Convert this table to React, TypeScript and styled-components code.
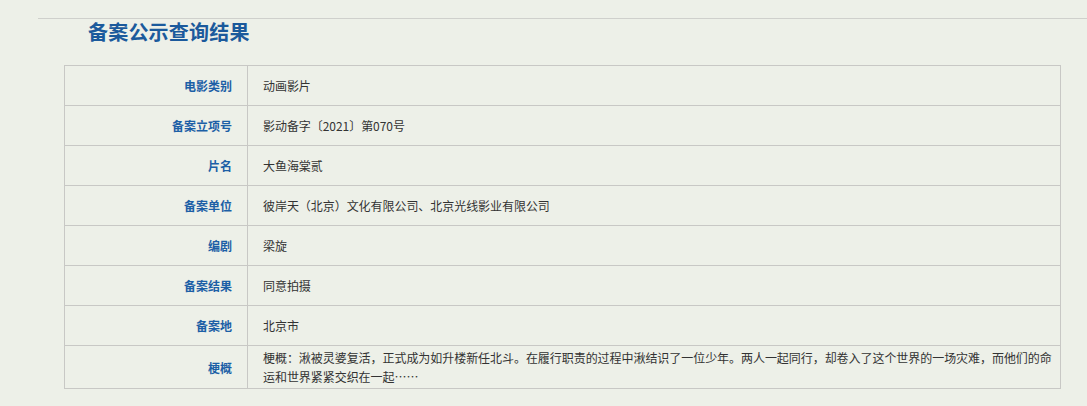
import React from "react";
import styled, { createGlobalStyle } from "styled-components";

const GlobalStyle = createGlobalStyle`
  html, body {
    margin: 0;
    padding: 0;
    background: #edf0e8;
    font-family: "Noto Sans CJK SC", "Noto Sans", sans-serif;
  }
`;

const rows: { label: string; value: string }[] = [
  { label: "电影类别", value: "动画影片" },
  { label: "备案立项号", value: "影动备字〔2021〕第070号" },
  { label: "片名", value: "大鱼海棠贰" },
  { label: "备案单位", value: "彼岸天（北京）文化有限公司、北京光线影业有限公司" },
  { label: "编剧", value: "梁旋" },
  { label: "备案结果", value: "同意拍摄" },
  { label: "备案地", value: "北京市" },
  {
    label: "梗概",
    value:
      "梗概：湫被灵婆复活，正式成为如升楼新任北斗。在履行职责的过程中湫结识了一位少年。两人一起同行，却卷入了这个世界的一场灾难，而他们的命运和世界紧紧交织在一起……",
  },
];

const App = () => {
  return (
    <>
      <GlobalStyle />
      <Page>
        <Header>
          <Title>备案公示查询结果</Title>
        </Header>
        <Result>
          <tbody>
            {rows.map((row) => (
              <Row key={row.label}>
                <Label>{row.label}</Label>
                <Value>{row.value}</Value>
              </Row>
            ))}
          </tbody>
        </Result>
      </Page>
    </>
  );
};

export default App;

const Page = styled.div`
  width: 1087px;
  height: 406px;
  padding-top: 18px;
  box-sizing: border-box;
  overflow: hidden;
`;

const Header = styled.div`
  margin-left: 38px;
  padding-left: 50px;
  border-top: 1px solid #cfd0cc;
  height: 46px;
`;

const Title = styled.h2`
  margin: 0;
  color: #1b5a9c;
  font-size: 20px;
  font-weight: 700;
  line-height: 26px;
  letter-spacing: 0.2px;
`;

const Result = styled.table`
  margin-left: 64px;
  width: 997px;
  border-collapse: collapse;
  border: 1px solid #c8c8c5;
  font-size: 12px;
`;

const Row = styled.tr`
  height: 40px;
`;

const Label = styled.th`
  width: 152px;
  padding: 0 15px;
  border: 1px solid #c8c8c5;
  text-align: right;
  color: #1c5fa6;
  font-weight: 700;
`;

const Value = styled.td`
  padding: 2px 2px 2px 15px;
  border: 1px solid #c8c8c5;
  color: #333;
  line-height: 19px;
  letter-spacing: -0.05px;
`;
